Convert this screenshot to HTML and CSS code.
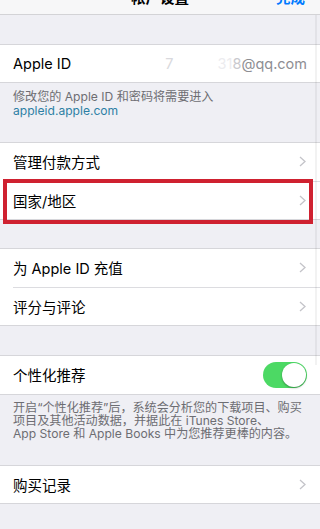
FILE: index.html
```html
<!DOCTYPE html>
<html lang="zh-CN">
<head>
<meta charset="utf-8">
<title>帐户设置</title>
<link rel="stylesheet" href="styles.css">
</head>
<body>
<div class="page">
  <div class="nav">
    <div class="nav-inner">
      <span></span>
      <span class="nav-title">帐户设置</span>
      <span class="nav-done">完成</span>
    </div>
  </div>

  <div class="group g1">
    <div class="row">
      <span class="label">Apple ID</span>
      <span class="value"><span class="fade1">7</span><span class="fade2">31</span><span class="fade3">8</span>@qq.com</span>
    </div>
  </div>
  <div class="footer f1">
    修改您的 Apple ID 和密码将需要进入<br>
    <span class="link">appleid.apple.com</span>
  </div>

  <div class="group g2">
    <div class="row">
      <span class="label">管理付款方式</span>
      <svg class="chev" width="7" height="11" viewBox="0 0 7 11"><polyline points="1,1 6,5.5 1,10" fill="none" stroke="#c4c4c9" stroke-width="1.3"/></svg>
    </div>
    <div class="row highlight">
      <span class="label">国家/地区</span>
      <svg class="chev" width="7" height="11" viewBox="0 0 7 11"><polyline points="1,1 6,5.5 1,10" fill="none" stroke="#c4c4c9" stroke-width="1.3"/></svg>
    </div>
  </div>

  <div class="group g3">
    <div class="row">
      <span class="label">为 Apple ID 充值</span>
      <svg class="chev" width="7" height="11" viewBox="0 0 7 11"><polyline points="1,1 6,5.5 1,10" fill="none" stroke="#c4c4c9" stroke-width="1.3"/></svg>
    </div>
    <div class="row">
      <span class="label">评分与评论</span>
      <svg class="chev" width="7" height="11" viewBox="0 0 7 11"><polyline points="1,1 6,5.5 1,10" fill="none" stroke="#c4c4c9" stroke-width="1.3"/></svg>
    </div>
  </div>

  <div class="group g4">
    <div class="row">
      <span class="label">个性化推荐</span>
      <span class="toggle"></span>
    </div>
  </div>
  <div class="footer f2">
    开启“个性化推荐”后，系统会分析您的下载项目、购买<br>
    项目及其他活动数据，并据此在 iTunes Store、<br>
    App Store 和 Apple Books 中为您推荐更棒的内容。
  </div>

  <div class="group g5">
    <div class="row">
      <span class="label">购买记录</span>
      <svg class="chev" width="7" height="11" viewBox="0 0 7 11"><polyline points="1,1 6,5.5 1,10" fill="none" stroke="#c4c4c9" stroke-width="1.3"/></svg>
    </div>
  </div>

  <div class="scroll-ind"></div>
</div>
</body>
</html>
```

FILE: styles.css
```css
html, body {
  margin: 0;
  padding: 0;
}
body {
  background: #efeff4;
  font-family: "Inter", "Noto Sans CJK SC", sans-serif;
  color: #000;
  width: 320px;
  height: 529px;
  overflow: hidden;
}
.page {
  position: relative;
  min-height: 529px;
}
.nav {
  height: 14px;
  background: #f7f7f8;
  border-bottom: 1px solid #d3d3d6;
  overflow: hidden;
}
.nav-inner {
  display: grid;
  grid-template-columns: 1fr auto 1fr;
  align-items: center;
  margin-top: -11px;
  padding: 0 15px;
  line-height: 17px;
  font-size: 14.5px;
}
.nav-title {
  font-weight: 600;
}
.nav-done {
  justify-self: end;
  color: #007aff;
  font-weight: 600;
}
.group {
  background: #fff;
  border-top: 1px solid #d6d6da;
  border-bottom: 1px solid #d6d6da;
  padding-left: 13px;
}
.row {
  position: relative;
  height: 37.5px;
  display: flex;
  align-items: center;
  justify-content: space-between;
  padding-right: 13px;
  font-size: 14.5px;
}
.row + .row {
  border-top: 1px solid #dcdce0;
}
.g1 { margin-top: 29px; }
.g1 .row { height: 37px; }
.g3 { margin-top: 28px; }
.g4 { margin-top: 29px; }
.label {
  white-space: nowrap;
}
.value {
  color: #8e8e93;
  white-space: nowrap;
}
.fade1 {
  color: #d9d9dd;
  margin-right: 44px;
}
.fade2 {
  color: #ececef;
}
.fade3 {
  color: #c9c9ce;
}
.chev {
  display: block;
  margin-right: 1px;
}
.footer {
  color: #6d6d72;
  font-size: 12.1px;
  padding-left: 13px;
  white-space: nowrap;
}
.f1 {
  line-height: 14px;
  padding-top: 7px;
  padding-bottom: 24px;
}
.f2 {
  line-height: 13px;
  padding-top: 6px;
  padding-bottom: 25px;
}
.link {
  color: #2d7fa4;
}
.highlight::after {
  content: "";
  position: absolute;
  top: -3px;
  bottom: -5px;
  left: -10px;
  right: 7px;
  border: 4px solid #cf2130;
}
.toggle {
  position: relative;
  width: 44px;
  height: 26px;
  border-radius: 13px;
  background: #4cd964;
}
.toggle::after {
  content: "";
  position: absolute;
  top: 1px;
  right: 1px;
  width: 24px;
  height: 24px;
  border-radius: 50%;
  background: #fff;
  box-shadow: 0 1px 2px rgba(0, 0, 0, 0.35);
}
.scroll-ind {
  position: absolute;
  top: 15px;
  right: 3px;
  width: 2px;
  height: 350px;
  background: rgba(0, 0, 0, 0.05);
}
```
